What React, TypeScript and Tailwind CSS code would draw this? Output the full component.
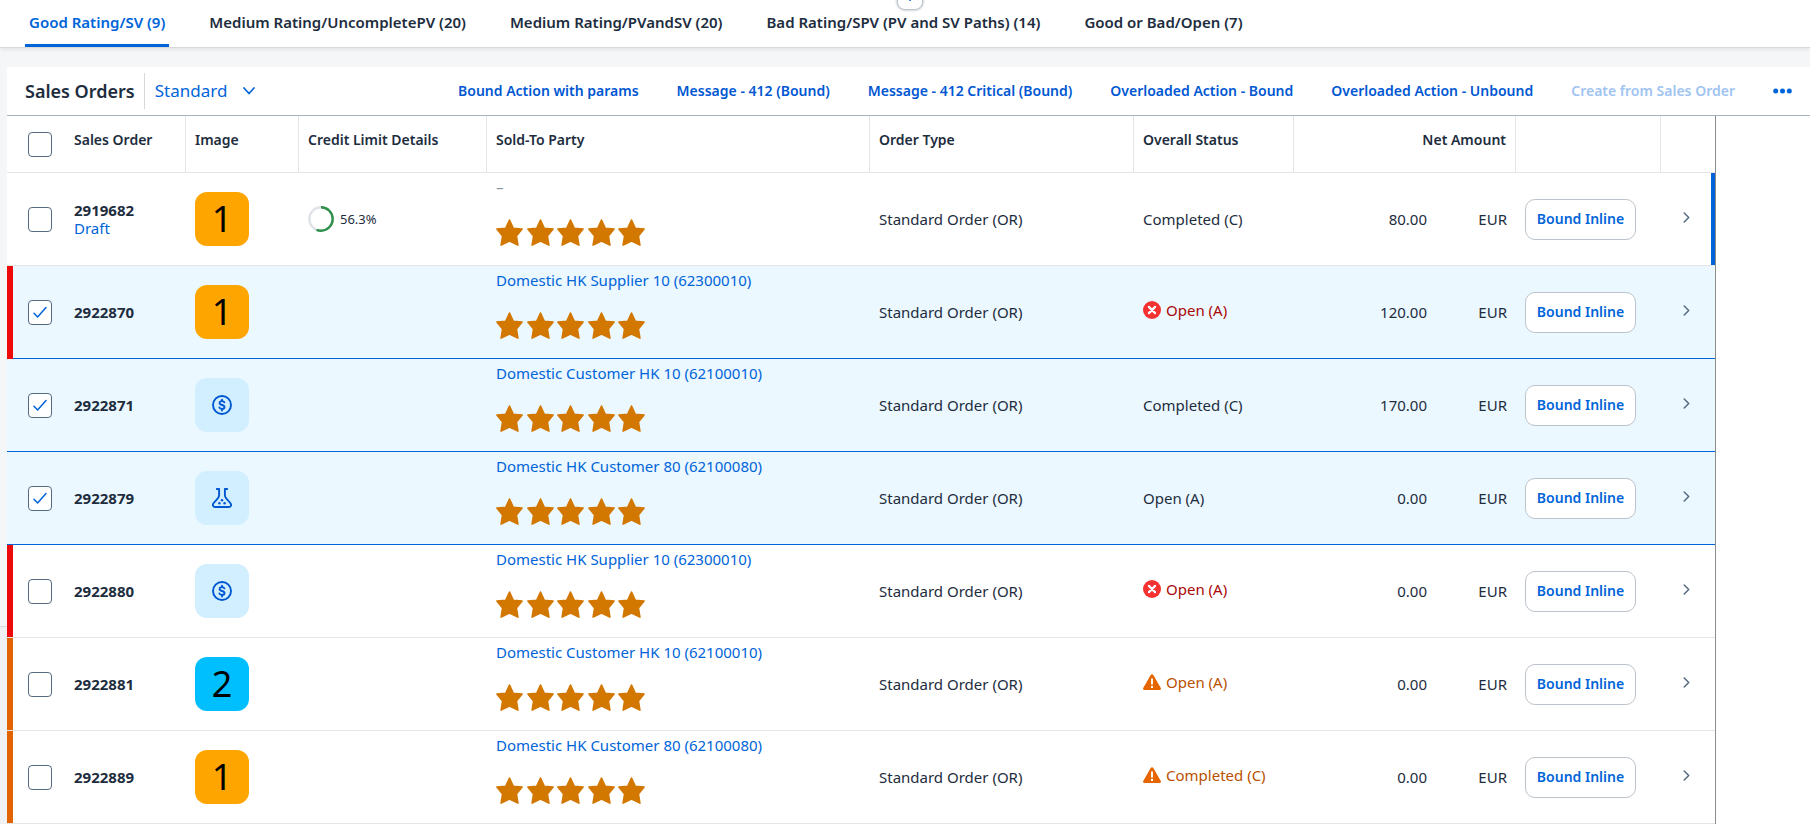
import { useState } from 'react';

type ImageKind = 'one' | 'two' | 'money' | 'lab';
type Level = 'error' | 'warning' | 'none';

interface Order {
  id: string;
  draft?: boolean;
  image: ImageKind;
  credit?: number;
  party?: string;
  status: string;
  level: Level;
  highlight: Level;
  amount: string;
  checked: boolean;
}

const tabs = [
  'Good Rating/SV (9)',
  'Medium Rating/UncompletePV (20)',
  'Medium Rating/PVandSV (20)',
  'Bad Rating/SPV (PV and SV Paths) (14)',
  'Good or Bad/Open (7)',
];

const actions = [
  'Bound Action with params',
  'Message - 412 (Bound)',
  'Message - 412 Critical (Bound)',
  'Overloaded Action - Bound',
  'Overloaded Action - Unbound',
];

const initialOrders: Order[] = [
  { id: '2919682', draft: true, image: 'one', credit: 56.3, status: 'Completed (C)', level: 'none', highlight: 'none', amount: '80.00', checked: false },
  { id: '2922870', image: 'one', party: 'Domestic HK Supplier 10 (62300010)', status: 'Open (A)', level: 'error', highlight: 'error', amount: '120.00', checked: true },
  { id: '2922871', image: 'money', party: 'Domestic Customer HK 10 (62100010)', status: 'Completed (C)', level: 'none', highlight: 'none', amount: '170.00', checked: true },
  { id: '2922879', image: 'lab', party: 'Domestic HK Customer 80 (62100080)', status: 'Open (A)', level: 'none', highlight: 'none', amount: '0.00', checked: true },
  { id: '2922880', image: 'money', party: 'Domestic HK Supplier 10 (62300010)', status: 'Open (A)', level: 'error', highlight: 'error', amount: '0.00', checked: false },
  { id: '2922881', image: 'two', party: 'Domestic Customer HK 10 (62100010)', status: 'Open (A)', level: 'warning', highlight: 'warning', amount: '0.00', checked: false },
  { id: '2922889', image: 'one', party: 'Domestic HK Customer 80 (62100080)', status: 'Completed (C)', level: 'warning', highlight: 'warning', amount: '0.00', checked: false },
];

const highlightClass: Record<Level, string> = {
  error: 'bg-[#ee0a0a]',
  warning: 'bg-[#e26300]',
  none: '',
};

const statusClass: Record<Level, string> = {
  error: 'text-[#aa0808]',
  warning: 'text-[#b95100]',
  none: 'text-[#1d2d3e]',
};

function Checkbox({ label, checked, onChange }: { label: string; checked: boolean; onChange: () => void }) {
  return (
    <span className="grid h-[25px] w-6 place-items-center">
      <input
        type="checkbox"
        aria-label={label}
        checked={checked}
        onChange={onChange}
        className="col-start-1 row-start-1 h-[25px] w-6 appearance-none rounded-[4px] border border-[#556b81] bg-white"
      />
      {checked && (
        <svg viewBox="0 0 16 16" className="pointer-events-none col-start-1 row-start-1 size-4" fill="none" stroke="#0064d9" strokeWidth="1.5" strokeLinecap="round" strokeLinejoin="round" aria-hidden="true">
          <path d="M2 9.2 5.6 13 14 3.6" />
        </svg>
      )}
    </span>
  );
}

function OrderImage({ kind }: { kind: ImageKind }) {
  if (kind === 'one' || kind === 'two') {
    return (
      <span className={`grid size-[54px] place-items-center rounded-xl text-[36px] leading-none text-black ${kind === 'one' ? 'bg-[#ffa500]' : 'bg-[#00bfff]'}`}>
        {kind === 'one' ? '1' : '2'}
      </span>
    );
  }
  return (
    <span className="grid size-[54px] place-items-center rounded-xl bg-[#d1efff]">
      {kind === 'money' ? (
        <svg viewBox="0 0 20 20" className="size-5" fill="none" stroke="#0057d2" strokeLinecap="round" strokeWidth="1.9" aria-hidden="true">
          <circle cx="10" cy="10" r="9" />
          <path d="M12.4 7.3C12 6.4 11.1 6.1 10 6.1c-1.400 0-2.400.7-2.400 1.900 0 2.700 4.900 1.300 4.900 4 0 1.200-1.100 1.900-2.500 1.900-1.200 0-2.200-.4-2.600-1.400M10 4.600v1.400M10 14v1.500" />
        </svg>
      ) : (
        <svg viewBox="0 0 20 20" className="size-5" fill="none" stroke="#0057d2" strokeWidth="1.9" strokeLinecap="round" strokeLinejoin="round" aria-hidden="true">
          <path d="M4.800 1h2.300v6.300c0 1.300-.4 2-1.300 3L1.700 15C.1 17 1 19 3.200 19h13.600c2.200 0 3.100-2 1.500-4l-4.100-4.700c-.9-1-1.300-1.700-1.300-3V1h2.300" />
          <g fill="#0057d2" stroke="none">
            <circle cx="10" cy="12.300" r="1.200" />
            <circle cx="7.400" cy="15.300" r="1.200" />
            <circle cx="12.600" cy="15.300" r="1.200" />
          </g>
        </svg>
      )}
    </span>
  );
}

function StatusIcon({ level }: { level: Level }) {
  if (level === 'error') {
    return (
      <svg viewBox="0 0 18 18" className="size-[18px]" aria-hidden="true">
        <circle cx="9" cy="9" r="9" fill="#f53232" />
        <path d="m5.900 5.900 6.200 6.200M12.100 5.900l-6.200 6.200" stroke="#fff" strokeWidth="2.200" strokeLinecap="round" />
      </svg>
    );
  }
  if (level === 'warning') {
    return (
      <svg viewBox="0 0 18 18" className="size-[18px]" aria-hidden="true">
        <path d="M7.700 1.900a1.500 1.500 0 0 1 2.600 0l7.500 13.200a1.300 1.300 0 0 1-1.100 1.900H1.300a1.300 1.300 0 0 1-1.100-1.900z" fill="#e76500" />
        <path d="M9 6.200v4.500" stroke="#fff" strokeWidth="1.900" strokeLinecap="round" />
        <circle cx="9" cy="13.900" r="1.200" fill="#fff" />
      </svg>
    );
  }
  return null;
}

function Rating() {
  return (
    <div className="mt-[22px] flex w-[149px] justify-between" role="img" aria-label="5 of 5 stars">
      {[1, 2, 3, 4, 5].map((n) => (
        <svg key={n} viewBox="0 0 27 27" className="size-[27px]" fill="#d27700" stroke="#d27700" strokeWidth="1.600" strokeLinejoin="round" aria-hidden="true">
          <path d="M13.500 1 17.200 9.200 26.100 10 20.400 16.900 21.900 26.100 13.500 22 5.100 26.100 6.600 16.900.9 10 9.800 9.200z" />
        </svg>
      ))}
    </div>
  );
}

function CreditRing({ value }: { value: number }) {
  return (
    <span className="flex items-center gap-[6px] text-[13px] text-[#1d2d3e]">
      <svg viewBox="0 0 26 26" className="size-[26px] -rotate-90" fill="none" strokeWidth="2.400" aria-hidden="true">
        <circle cx="13" cy="13" r="11.700" stroke="#dfe3e8" />
        <circle cx="13" cy="13" r="11.700" stroke="#30914c" pathLength="100" strokeDasharray={`${value} 100`} />
      </svg>
      {value}%
    </span>
  );
}

const headCell = 'h-[57px] border-b border-[#e5e5e5] px-[9px] pt-[14px] align-top text-left text-sm leading-5 font-semibold';

export default function App() {
  const [orders, setOrders] = useState(initialOrders);
  const all = orders.every((o) => o.checked);
  const toggle = (id: string) => setOrders(orders.map((o) => (o.id === id ? { ...o, checked: !o.checked } : o)));
  const toggleAll = () => setOrders(orders.map((o) => ({ ...o, checked: !all })));

  return (
    <div className='flex min-h-screen flex-col bg-[#f5f6f7] font-["Noto_Sans",sans-serif] text-[15px] leading-5 text-[#1d2d3e]'>
      <header className="relative overflow-hidden border-b border-[#d9d9d9] bg-white shadow-[0_2px_3px_rgba(34,53,72,0.08)]">
        <button type="button" aria-label="Pin header" className="absolute -top-4 left-1/2 -ml-2 grid size-[26px] place-items-center rounded-lg border border-[#bcc3ca] bg-white shadow-[0_0_2px_1px_rgba(34,53,72,0.2)]">
          <svg viewBox="0 0 16 16" className="size-4" fill="none" stroke="#0064d9" strokeWidth="1.500" aria-hidden="true">
            <path d="M5 1h6M6 1v4L4 8h8l-2-3V1M8 8v4" />
          </svg>
        </button>
        <nav className="flex gap-9 pl-[25px]">
          {tabs.map((tab, i) => (
            <a
              key={tab}
              href="#"
              className={`border-b-[3px] px-1 py-3 font-semibold whitespace-nowrap ${i === 0 ? 'border-[#0064d9] text-[#0064d9]' : 'border-transparent'}`}
            >
              {tab}
            </a>
          ))}
        </nav>
      </header>

      <div className="flex flex-1">
        <div className="flex w-[7px] shrink-0 flex-col">
          <div className="h-[579px] border-b border-[#d9dce0]" />
          <div className="flex-1 bg-[#eff1f3]" />
        </div>
        <main className="mt-[19px] min-w-0 flex-1 bg-white">
          <div className="flex h-[49px] items-center border-b border-[#a8b3bd] pr-[18px] pl-[18px]">
            <h2 className="text-lg leading-6 font-semibold whitespace-nowrap">Sales Orders</h2>
            <div className="mr-[10px] ml-[9px] h-9 w-px bg-[#d9d9d9]" />
            <button type="button" className="flex items-center gap-4 text-[17px] leading-6 text-[#0064d9]">
              Standard
              <svg viewBox="0 0 12 8" className="h-2 w-3" fill="none" stroke="currentColor" strokeWidth="1.700" strokeLinecap="round" strokeLinejoin="round" aria-hidden="true">
                <path d="m1 1 5 5.500L11 1" />
              </svg>
            </button>
            <div className="ml-auto flex items-center gap-[38px] text-sm font-semibold whitespace-nowrap text-[#0057d2]">
              {actions.map((a) => (
                <button key={a} type="button">{a}</button>
              ))}
              <button type="button" disabled className="text-[#9fc4f1]">Create from Sales Order</button>
              <button type="button" aria-label="More actions">
                <svg viewBox="0 0 19 6" className="h-[6px] w-[19px]" fill="#0064d9" aria-hidden="true">
                  <circle cx="2.700" cy="3" r="2.500" />
                  <circle cx="9.500" cy="3" r="2.500" />
                  <circle cx="16.300" cy="3" r="2.500" />
                </svg>
              </button>
            </div>
          </div>

          <div className="pr-[94px]">
            <table className="w-full table-fixed border-separate border-spacing-0 border-r border-[#8c8c8c]">
              <colgroup>
                <col className="w-[6px]" />
                <col className="w-[52px]" />
                <col className="w-[121px]" />
                <col className="w-[113px]" />
                <col className="w-[188px]" />
                <col />
                <col className="w-[264px]" />
                <col className="w-[160px]" />
                <col className="w-[142px]" />
                <col className="w-[80px]" />
                <col className="w-[145px]" />
                <col className="w-[50px]" />
                <col className="w-[4px]" />
              </colgroup>
              <thead>
                <tr>
                  <td className="border-b border-[#e5e5e5] p-0" />
                  <td className="border-b border-[#e5e5e5] p-0 pl-[15px]">
                    <Checkbox label="Select all" checked={all} onChange={toggleAll} />
                  </td>
                  <th className={`${headCell} border-r`}>Sales Order</th>
                  <th className={`${headCell} border-r`}>Image</th>
                  <th className={`${headCell} border-r`}>Credit Limit Details</th>
                  <th className={`${headCell} border-r`}>Sold-To Party</th>
                  <th className={`${headCell} border-r`}>Order Type</th>
                  <th className={`${headCell} border-r`}>Overall Status</th>
                  <th colSpan={2} className={`${headCell} border-r`}>
                    <span className="block text-right">Net Amount</span>
                  </th>
                  <td className={`${headCell} border-r`} />
                  <td colSpan={2} className={headCell} />
                </tr>
              </thead>
              <tbody>
                {orders.map((o) => {
                  const cell = `h-[93px] border-b px-[9px] py-0 ${o.checked ? 'border-[#0064d9] bg-[#ebf8ff]' : 'border-[#e5e5e5]'}`;
                  return (
                    <tr key={o.id}>
                      <td className={`border-b p-0 ${highlightClass[o.highlight]} ${o.checked ? (o.highlight === 'none' ? 'border-[#0064d9] bg-[#ebf8ff]' : 'border-[#ee0a0a]') : 'border-[#e5e5e5]'}`} />
                      <td className={`h-[93px] border-b p-0 pl-[15px] ${o.checked ? 'border-[#0064d9] bg-[#ebf8ff]' : 'border-[#e5e5e5]'}`}>
                        <Checkbox label={`Select ${o.id}`} checked={o.checked} onChange={() => toggle(o.id)} />
                      </td>
                      <td className={cell}>
                        <div className="leading-[18px] font-bold">{o.id}</div>
                        {o.draft && <a href="#" className="block leading-[18px] text-[#0064d9]">Draft</a>}
                      </td>
                      <td className={cell}><OrderImage kind={o.image} /></td>
                      <td className={cell}>{o.credit !== undefined && <CreditRing value={o.credit} />}</td>
                      <td className={`${cell} align-top`}>
                        <div className="pt-1 whitespace-nowrap">
                          {o.party ? <a href="#" className="text-[#0064d9]">{o.party}</a> : <span className="text-[#8396a8]">–</span>}
                        </div>
                        <Rating />
                      </td>
                      <td className={cell}>Standard Order (OR)</td>
                      <td className={cell}>
                        <span className={`flex items-center gap-[5px] whitespace-nowrap ${statusClass[o.level]} ${o.level === 'none' ? '' : 'pb-1'}`}>
                          <StatusIcon level={o.level} />
                          {o.status}
                        </span>
                      </td>
                      <td className={`${cell} text-right`}>{o.amount}</td>
                      <td className={`${cell} text-right`}>EUR</td>
                      <td className={cell}>
                        <button type="button" className="h-[41px] w-[111px] rounded-[10px] border border-[#bcc3ca] bg-white text-sm font-semibold whitespace-nowrap text-[#0064d9]">
                          Bound Inline
                        </button>
                      </td>
                      <td className={cell}>
                        <a href="#" aria-label={`Open ${o.id}`} className="flex justify-center pb-1">
                          <svg viewBox="0 0 7 11" className="h-[11px] w-[7px]" fill="none" stroke="#556b81" strokeWidth="1.500" strokeLinecap="round" strokeLinejoin="round" aria-hidden="true">
                            <path d="m1.200 1 4.500 4.500L1.200 10" />
                          </svg>
                        </a>
                      </td>
                      <td className={`border-b p-0 ${o.draft ? 'bg-[#0064d9]' : o.checked ? 'bg-[#ebf8ff]' : ''} ${o.checked ? 'border-[#0064d9]' : 'border-[#e5e5e5]'}`} />
                    </tr>
                  );
                })}
              </tbody>
            </table>
          </div>
        </main>
      </div>
    </div>
  );
}
